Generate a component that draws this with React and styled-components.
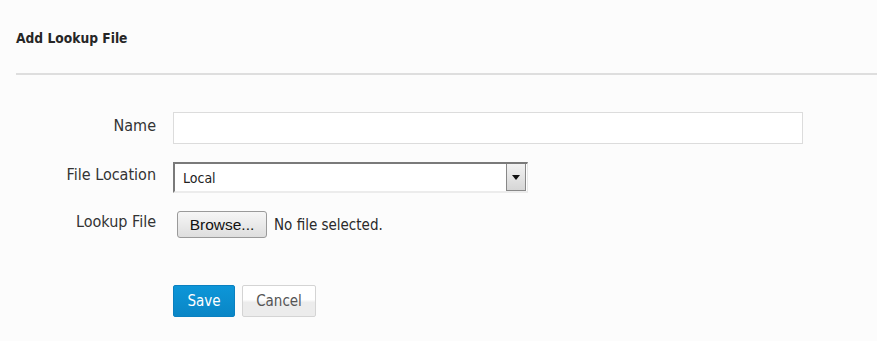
import React from "react";
import styled, { createGlobalStyle } from "styled-components";

const GlobalStyle = createGlobalStyle`
  html, body {
    margin: 0;
    padding: 0;
    background: #fcfcfc;
  }
  body {
    font-family: "DejaVu Sans Condensed", "DejaVu Sans", sans-serif;
    color: #333;
  }
`;

const Page = styled.div`
  padding: 0 0 0 16px;
`;

const Header = styled.div`
  height: 73px;
  border-bottom: 2px solid #dedede;
  display: flex;
  align-items: center;
`;

const Title = styled.h3`
  margin: 0;
  padding-top: 2px;
  font-size: 13.7px;
  font-weight: bold;
  color: #262626;
`;

const Form = styled.form`
  padding-top: 37px;
  display: flex;
  flex-direction: column;
`;

const Row = styled.div`
  display: grid;
  grid-template-columns: 140px 1fr;
  column-gap: 17px;
  align-items: center;
  margin-bottom: 18px;
`;

const Label = styled.label`
  text-align: right;
  font-size: 16px;
  color: #333;
  padding-bottom: ${(p) => p.$lift || 5}px;
`;

const TextInput = styled.input`
  box-sizing: border-box;
  width: 630px;
  height: 32px;
  border: 1px solid #dcdcdc;
  background: #fff;
  outline: none;
`;

const SelectBox = styled.div`
  box-sizing: border-box;
  width: 355px;
  height: 31px;
  display: flex;
  border-top: 2px solid #7a7a7a;
  border-left: 2px solid #7a7a7a;
  border-right: 1px solid #e6e6e6;
  border-bottom: 2px solid #ececec;
  background: #fff;
`;

const SelectText = styled.div`
  flex: 1;
  padding-left: 8px;
  display: flex;
  align-items: center;
  font-size: 14px;
  color: #222;
`;

const ArrowBox = styled.div`
  width: 18px;
  margin: 0 1px 0 0;
  display: flex;
  align-items: center;
  justify-content: center;
  border: 1px solid #888;
  border-top: 0;
  background: linear-gradient(#f2f2f2, #d6d6d6);
`;

const FileRow = styled.div`
  display: flex;
  align-items: center;
  gap: 7px;
  padding-left: 4px;
`;

const BrowseButton = styled.button`
  box-sizing: border-box;
  width: 90px;
  height: 27px;
  font-family: "Liberation Sans", Arial, sans-serif;
  font-size: 15.5px;
  color: #111;
  border: 1px solid #9a9a9a;
  border-radius: 3px;
  background: linear-gradient(#f6f6f6, #dedede);
  padding: 0;
`;

const FileNote = styled.span`
  font-size: 15px;
  color: #2a2a2a;
`;

const Actions = styled.div`
  display: flex;
  gap: 7px;
  margin-left: 157px;
  margin-top: 29px;
`;

const Button = styled.button`
  box-sizing: border-box;
  height: 32px;
  width: ${(p) => p.$w}px;
  font-family: "DejaVu Sans Condensed", "DejaVu Sans", sans-serif;
  font-size: 15px;
  padding: 0;
  border-radius: 2px;
  color: ${(p) => (p.$primary ? "#fff" : "#555")};
  border: 1px solid ${(p) => (p.$primary ? "#0a80c0" : "#d4d4d4")};
  background: ${(p) =>
    p.$primary
      ? "linear-gradient(#0d96d8, #0a86c6)"
      : "linear-gradient(#ffffff 45%, #ececec 55%)"};
`;

export default function App() {
  return (
    <Page>
      <GlobalStyle />
      <Header>
        <Title>Add Lookup File</Title>
      </Header>
      <Form>
        <Row>
          <Label>Name</Label>
          <TextInput type="text" />
        </Row>
        <Row>
          <Label $lift={7}>File Location</Label>
          <SelectBox>
            <SelectText>Local</SelectText>
            <ArrowBox>
              <svg width="8" height="5" viewBox="0 0 8 5">
                <path d="M0 0h8L4 5z" fill="#111" />
              </svg>
            </ArrowBox>
          </SelectBox>
        </Row>
        <Row>
          <Label $lift={7}>Lookup File</Label>
          <FileRow>
            <BrowseButton type="button">Browse...</BrowseButton>
            <FileNote>No file selected.</FileNote>
          </FileRow>
        </Row>
        <Actions>
          <Button type="button" $primary $w={62}>Save</Button>
          <Button type="button" $w={74}>Cancel</Button>
        </Actions>
      </Form>
    </Page>
  );
}
